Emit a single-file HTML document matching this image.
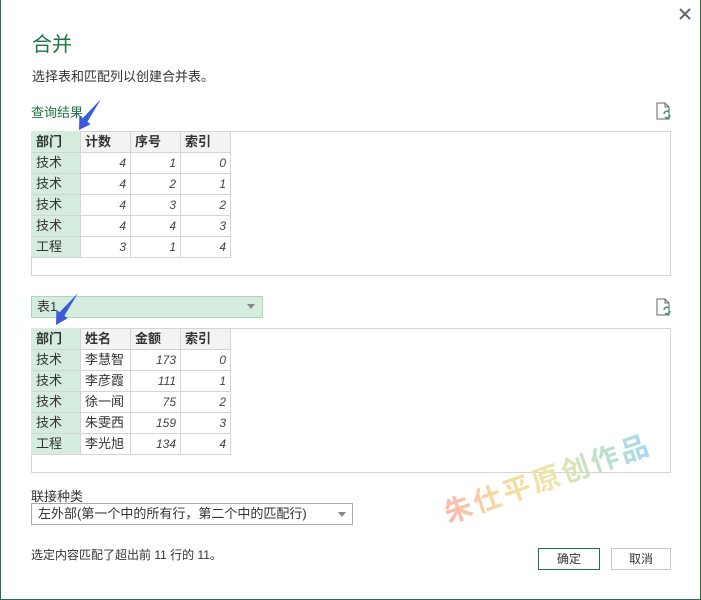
<!DOCTYPE html>
<html><head><meta charset="utf-8"><style>
*{margin:0;padding:0;box-sizing:border-box}
body{width:701px;height:600px;background:#fff;font-family:"Liberation Sans","Noto Sans CJK SC",sans-serif;color:#333;position:relative;overflow:hidden;font-size:13px}
.frame{position:absolute;left:0;top:0;width:701px;height:600px;border:1px solid #217346;border-top:none}
.a{position:absolute;white-space:nowrap}
.box{position:absolute;border:1px solid #d4d4d4;background:#fff}
table{border-collapse:collapse;position:absolute;left:-1px;top:-1px;font-size:13px}
td{border:1px solid #d4d4d4;height:21px;width:50px;padding:0 4px;line-height:20px}
td.k{background:#d5ecdf;width:49px;border-color:#d5ecdf #d4d4d4 #d4d4d4 #d5ecdf}
tr.h td{background:#f3f3f3;font-weight:bold;height:20px}
tr.h td.k{background:#d5ecdf}
td.n{text-align:right;font-style:italic;font-size:12px;color:#444}
.btn{position:absolute;height:22px;text-align:center;line-height:20px;font-size:12px;background:#fff}
</style></head><body>
<div class="frame"></div>
<svg class="a" style="left:679px;top:8px" width="12" height="12"><path d="M1 1L11 11M11 1L1 11" stroke="#666" stroke-width="2"/></svg>
<div class="a" style="left:32px;top:28px;font-size:20px;color:#217346">合并</div>
<div class="a" style="left:32px;top:66px;font-size:13px;color:#333">选择表和匹配列以创建合并表。</div>
<div class="a" style="left:31px;top:102px;font-size:13px;color:#217346">查询结果</div>
<svg class="a" style="left:654px;top:101px" width="20" height="20"><path d="M3 2h8l4 4v12H3z" fill="none" stroke="#666"/><path d="M11 2v4h4" fill="none" stroke="#666"/><path d="M10 13a3 3 0 0 1 5-2M16 14a3 3 0 0 1-5 2" fill="none" stroke="#3a9a6a" stroke-width="1.5"/></svg>
<svg class="a" style="left:654px;top:297px" width="20" height="20"><path d="M3 2h8l4 4v12H3z" fill="none" stroke="#666"/><path d="M11 2v4h4" fill="none" stroke="#666"/><path d="M10 13a3 3 0 0 1 5-2M16 14a3 3 0 0 1-5 2" fill="none" stroke="#3a9a6a" stroke-width="1.5"/></svg>

<div class="box" style="left:31px;top:131px;width:640px;height:145px">
<table>
<tr class="h"><td class="k">部门</td><td>计数</td><td>序号</td><td>索引</td></tr>
<tr><td class="k">技术</td><td class="n">4</td><td class="n">1</td><td class="n">0</td></tr>
<tr><td class="k">技术</td><td class="n">4</td><td class="n">2</td><td class="n">1</td></tr>
<tr><td class="k">技术</td><td class="n">4</td><td class="n">3</td><td class="n">2</td></tr>
<tr><td class="k">技术</td><td class="n">4</td><td class="n">4</td><td class="n">3</td></tr>
<tr><td class="k">工程</td><td class="n">3</td><td class="n">1</td><td class="n">4</td></tr>
</table></div>

<div class="a" style="left:31px;top:296px;width:232px;height:22px;background:#d5ecdf;border:1px solid #a8d8bc;padding-left:5px;line-height:20px">表1</div>
<div class="a" style="left:247px;top:304px;width:0;height:0;border-left:4px solid transparent;border-right:4px solid transparent;border-top:5px solid #888"></div>

<div class="box" style="left:31px;top:328px;width:640px;height:145px">
<table>
<tr class="h"><td class="k">部门</td><td>姓名</td><td>金额</td><td>索引</td></tr>
<tr><td class="k">技术</td><td>李慧智</td><td class="n">173</td><td class="n">0</td></tr>
<tr><td class="k">技术</td><td>李彦霞</td><td class="n">111</td><td class="n">1</td></tr>
<tr><td class="k">技术</td><td>徐一闻</td><td class="n">75</td><td class="n">2</td></tr>
<tr><td class="k">技术</td><td>朱雯西</td><td class="n">159</td><td class="n">3</td></tr>
<tr><td class="k">工程</td><td>李光旭</td><td class="n">134</td><td class="n">4</td></tr>
</table></div>

<svg class="a" style="left:40px;top:95px" width="70" height="240">
<polygon points="61,4 47.4,26.8 50.6,29.2 39,35 39.4,20.8 42.6,23.2" fill="#3b5bdb"/>
<polygon points="38,198 24.4,220.8 27.6,223.2 16,230 16.4,214.8 19.6,217.2" fill="#3b5bdb"/>
</svg>

<div class="a" style="left:31px;top:486px;font-size:13px">联接种类</div>
<div class="a" style="left:31px;top:503px;width:322px;height:22px;border:1px solid #aaa;padding-left:6px;line-height:20px">左外部(第一个中的所有行，第二个中的匹配行)</div>
<div class="a" style="left:338px;top:512px;width:0;height:0;border-left:4px solid transparent;border-right:4px solid transparent;border-top:5px solid #888"></div>

<div class="a" style="left:438px;top:494px;transform:rotate(-19deg);transform-origin:left top;font-size:28px;font-weight:bold;letter-spacing:3px;background:linear-gradient(90deg,#f9b8b0,#f8d7a0,#efe4a8,#bfe0c8,#a8d8f0);-webkit-background-clip:text;color:transparent">朱仕平原创作品</div>

<div class="a" style="left:31px;top:546px;font-size:12px">选定内容匹配了超出前 11 行的 11。</div>
<div class="btn" style="left:538px;top:548px;width:62px;border:1px solid #217346">确定</div>
<div class="btn" style="left:611px;top:548px;width:60px;border:1px solid #c6c6c6">取消</div>
</body></html>
